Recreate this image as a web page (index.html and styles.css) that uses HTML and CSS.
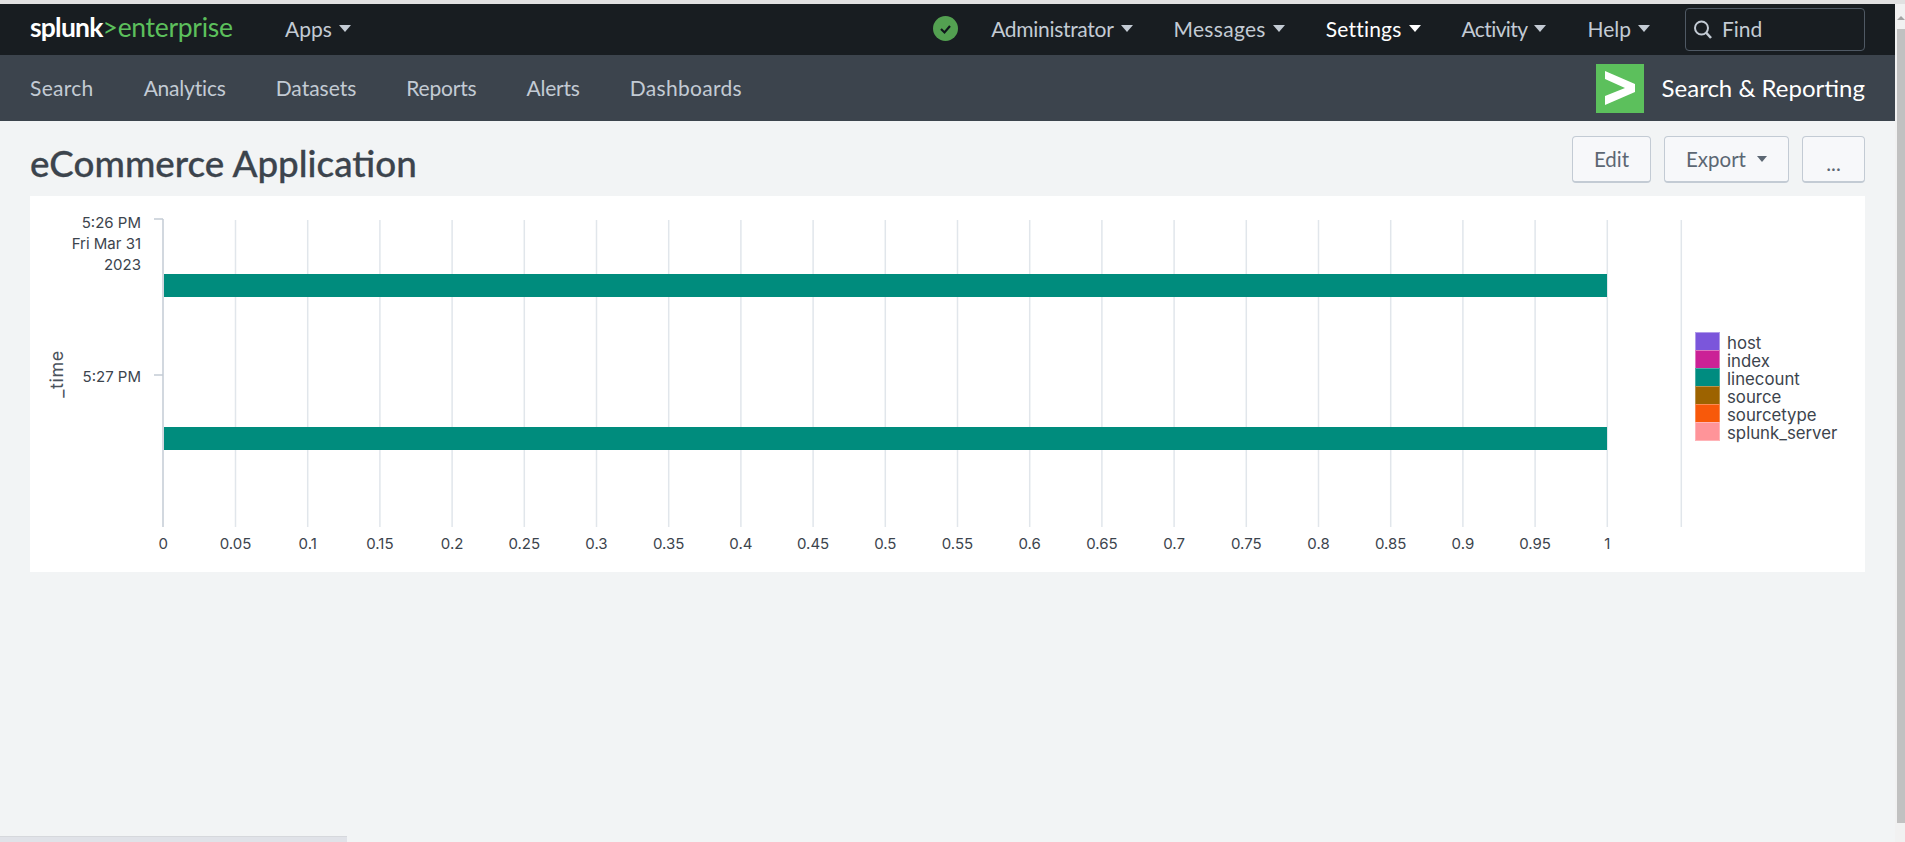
FILE: index.html
```html
<!DOCTYPE html>
<html lang="en">
<head>
<meta charset="utf-8">
<title>eCommerce Application</title>
<link rel="stylesheet" href="styles.css">
</head>
<body>
<div class="topstrip"></div>
<div class="frame">
  <main class="main">
    <header class="systembar">
      <div class="logo"><span class="logo-splunk">splunk</span><span class="logo-gt">&gt;</span><span class="logo-ent">enterprise</span></div>
      <a class="sys-item apps">Apps<i class="caret"></i></a>
      <div class="sys-right">
        <svg class="status" viewBox="0 0 25 25"><circle cx="12.5" cy="12.5" r="12.5" fill="#53a051"/><path d="M8 13l3.5 3.5L17 10" fill="none" stroke="#10171c" stroke-width="2.2"/></svg>
        <a class="sys-item item-admin">Administrator<i class="caret"></i></a>
        <a class="sys-item item-messages">Messages<i class="caret"></i></a>
        <a class="sys-item item-settings active">Settings<i class="caret"></i></a>
        <a class="sys-item item-activity">Activity<i class="caret"></i></a>
        <a class="sys-item">Help<i class="caret"></i></a>
        <div class="find">
          <svg class="find-icon" viewBox="0 0 20 20"><circle cx="8.5" cy="8" r="6.5" fill="none" stroke="#c3cbd4" stroke-width="2"/><path d="M13 12.500l5 5.500" stroke="#c3cbd4" stroke-width="2.6"/></svg>
          <span class="find-label">Find</span>
        </div>
      </div>
    </header>
    <nav class="appbar">
      <a class="app-link link-search">Search</a>
      <a class="app-link link-tight">Analytics</a>
      <a class="app-link">Datasets</a>
      <a class="app-link link-tight">Reports</a>
      <a class="app-link link-tight">Alerts</a>
      <a class="app-link link-search">Dashboards</a>
      <div class="app-brand">
        <svg class="app-icon" viewBox="0 0 48 49"><rect width="48" height="49" fill="#5cc05c"/><path d="M9 7L39 20V28L9 41V32L29 24L9 15z" fill="#fff"/></svg>
        <span class="app-name">Search &amp; Reporting</span>
      </div>
    </nav>
    <section class="titlebar">
      <h1 class="title">eCommerce Application</h1>
      <div class="actions">
        <button class="btn btn-edit">Edit</button>
        <button class="btn btn-export">Export<i class="caret caret-dark"></i></button>
        <button class="btn btn-more">...</button>
      </div>
    </section>
    <section class="panel">
      <svg class="chart" viewBox="30 196 1835 376">
        <g class="grid">
          <line x1="235.5" y1="220" x2="235.5" y2="527"/><line x1="307.7" y1="220" x2="307.7" y2="527"/>
          <line x1="379.9" y1="220" x2="379.9" y2="527"/><line x1="452.1" y1="220" x2="452.1" y2="527"/>
          <line x1="524.3" y1="220" x2="524.3" y2="527"/><line x1="596.5" y1="220" x2="596.5" y2="527"/>
          <line x1="668.7" y1="220" x2="668.7" y2="527"/><line x1="740.9" y1="220" x2="740.9" y2="527"/>
          <line x1="813.1" y1="220" x2="813.1" y2="527"/><line x1="885.3" y1="220" x2="885.3" y2="527"/>
          <line x1="957.5" y1="220" x2="957.5" y2="527"/><line x1="1029.7" y1="220" x2="1029.7" y2="527"/>
          <line x1="1101.9" y1="220" x2="1101.9" y2="527"/><line x1="1174.1" y1="220" x2="1174.1" y2="527"/>
          <line x1="1246.3" y1="220" x2="1246.3" y2="527"/><line x1="1318.5" y1="220" x2="1318.5" y2="527"/>
          <line x1="1390.7" y1="220" x2="1390.7" y2="527"/><line x1="1462.9" y1="220" x2="1462.9" y2="527"/>
          <line x1="1535.1" y1="220" x2="1535.1" y2="527"/><line x1="1607.3" y1="220" x2="1607.3" y2="527"/>
          <line x1="1681.3" y1="220" x2="1681.3" y2="527"/>
        </g>
        <g class="axis">
          <line x1="163" y1="219" x2="163" y2="527"/>
          <line x1="154" y1="219" x2="163" y2="219"/>
          <line x1="154" y1="375" x2="163" y2="375"/>
        </g>
        <rect class="bar" x="164" y="274" width="1443" height="23"/>
        <rect class="bar" x="164" y="427" width="1443" height="23"/>
        <g class="tick-y">
          <text x="141" y="228">5:26 PM</text>
          <text x="141" y="249">Fri Mar 31</text>
          <text x="141" y="270">2023</text>
          <text x="141" y="382">5:27 PM</text>
        </g>
        <text class="axis-title" transform="translate(63 374) rotate(-90)">_time</text>
        <g class="tick-x">
          <text x="163.3" y="549">0</text><text x="235.5" y="549">0.05</text><text x="307.7" y="549">0.1</text>
          <text x="379.9" y="549">0.15</text><text x="452.1" y="549">0.2</text><text x="524.3" y="549">0.25</text>
          <text x="596.5" y="549">0.3</text><text x="668.7" y="549">0.35</text><text x="740.9" y="549">0.4</text>
          <text x="813.1" y="549">0.45</text><text x="885.3" y="549">0.5</text><text x="957.5" y="549">0.55</text>
          <text x="1029.7" y="549">0.6</text><text x="1101.9" y="549">0.65</text><text x="1174.1" y="549">0.7</text>
          <text x="1246.3" y="549">0.75</text><text x="1318.5" y="549">0.8</text><text x="1390.7" y="549">0.85</text>
          <text x="1462.9" y="549">0.9</text><text x="1535.1" y="549">0.95</text><text x="1607.3" y="549">1</text>
        </g>
        <g class="legend">
          <rect class="sw-host" x="1695.5" y="332.5" width="24" height="18"/><text x="1727" y="349">host</text>
          <rect class="sw-index" x="1695.5" y="350.5" width="24" height="18"/><text x="1727" y="367">index</text>
          <rect class="sw-linecount" x="1695.5" y="368.5" width="24" height="18"/><text x="1727" y="385">linecount</text>
          <rect class="sw-source" x="1695.5" y="386.5" width="24" height="18"/><text x="1727" y="403">source</text>
          <rect class="sw-sourcetype" x="1695.5" y="404.5" width="24" height="18"/><text x="1727" y="421">sourcetype</text>
          <rect class="sw-server" x="1695.5" y="422.5" width="24" height="18"/><text x="1727" y="439">splunk_server</text>
        </g>
      </svg>
    </section>
    <div class="spacer"></div>
    <div class="hscroll"><div class="hthumb"></div></div>
  </main>
  <aside class="vscroll">
    <i class="vscroll-arrow"></i>
    <div class="vthumb"></div>
  </aside>
</div>
</body>
</html>
```
FILE: styles.css
```css
* { box-sizing: border-box; }
html, body { margin: 0; height: 100%; overflow: hidden; }
body {
  display: flex;
  flex-direction: column;
  font-family: "Lato", "Liberation Sans", sans-serif;
  background: #f2f4f5;
  color: #3c444d;
}
a { text-decoration: none; }
.topstrip { height: 4px; background: #e1e1e1; flex: none; }
.frame { flex: 1; display: flex; min-height: 0; }
.main { flex: 1; display: flex; flex-direction: column; min-width: 0; }

.systembar {
  height: 51px;
  flex: none;
  background: #181d21;
  display: flex;
  align-items: center;
  padding: 0 30px 2px;
}
.logo { width: 255px; font-size: 26.500px; line-height: 1; letter-spacing: -0.3px; margin-top: -2px; white-space: nowrap; }
.logo-splunk { color: #fff; font-weight: 700; letter-spacing: -0.8px; }
.logo-gt { color: #5cc05c; }
.logo-ent { color: #5cc05c; }
.sys-item {
  font-size: 21px;
  color: #c3cbd4;
  display: inline-flex;
  align-items: center;
  white-space: nowrap;
}
.sys-item.active { color: #fff; }
.item-admin { letter-spacing: -0.3px; }
.item-messages { letter-spacing: 0.3px; }
.item-settings { letter-spacing: 0.2px; }
.item-activity { letter-spacing: -0.6px; }
.caret {
  display: inline-block;
  width: 0;
  height: 0;
  margin-left: 7px;
  border-left: 6px solid transparent;
  border-right: 6px solid transparent;
  border-top: 7px solid currentColor;
}
.caret-dark { margin-left: 11px; border-left-width: 5.500px; border-right-width: 5.500px; border-top-width: 6px; }
.sys-right { margin-left: auto; display: flex; align-items: center; gap: 41px; }
.status { width: 25px; height: 25px; margin-right: -8px; }
.find {
  width: 180px;
  height: 43px;
  margin-left: -6px;
  margin-top: 2px;
  border: 1px solid #4f5964;
  border-radius: 4px;
  display: flex;
  align-items: center;
  gap: 9px;
  padding: 0 7px;
  color: #c3cbd4;
  font-size: 21px;
}
.find-icon { width: 20px; height: 20px; }
.find-label { margin-top: -2px; }

.appbar {
  height: 66px;
  flex: none;
  background: #3c444d;
  display: flex;
  align-items: center;
  gap: 50px;
  padding: 0 30px;
}
.app-link { font-size: 21px; color: #c3cbd4; margin-top: -2px; }
.link-search { letter-spacing: 0.3px; }
.link-tight { letter-spacing: -0.2px; }
.app-brand { margin-left: auto; display: flex; align-items: center; gap: 18px; }
.app-icon { width: 48px; height: 49px; }
.app-name { font-size: 24px; color: #fff; white-space: nowrap; margin-top: -2px; }

.titlebar {
  height: 75px;
  flex: none;
  display: flex;
  align-items: flex-start;
  justify-content: space-between;
  padding: 15px 30px 0;
}
.title { margin: 7px 0 0; font-size: 36.800px; line-height: 40px; font-weight: 500; color: #3c444d; -webkit-text-stroke: 0.3px #3c444d; }
.actions { display: flex; gap: 13px; }
.btn {
  height: 47px;
  border: 1px solid #c3cbd4;
  border-bottom-width: 2px;
  border-radius: 4px;
  background: #f7f8fa;
  color: #5c6773;
  font-family: inherit;
  font-size: 20.500px;
  padding: 0;
  display: flex;
  align-items: center;
  justify-content: center;
}
.btn-edit { width: 79px; }
.btn-export { width: 125px; }
.btn-more { width: 63px; padding-top: 8px; }

.panel { flex: none; height: 376px; margin: 0 30px; background: #fff; }
.chart { display: block; width: 100%; height: 100%; }
.grid line { stroke: #e1e6eb; stroke-width: 1.5; }
.axis line { stroke: #c3cbd4; stroke-width: 1.5; }
.bar { fill: #008c7d; }
.tick-y text, .tick-x text { font-family: "Inter", sans-serif; font-size: 15px; fill: #3c444d; }
.tick-y text { text-anchor: end; }
.tick-x text { text-anchor: middle; }
.axis-title { font-family: "Inter", sans-serif; font-size: 18px; letter-spacing: 0.6px; fill: #4a525b; text-anchor: middle; }
.legend text { font-family: "Inter", sans-serif; font-size: 16.800px; fill: #3c444d; }
.sw-host { fill: #7b56db; stroke: #b09be9; }
.sw-index { fill: #cb2196; stroke: #dd78bf; }
.sw-linecount { fill: #008c80; stroke: #4cadA4; }
.sw-source { fill: #9d6300; stroke: #ba924c; }
.sw-sourcetype { fill: #f8590a; stroke: #fa8b53; }
.sw-server { fill: #ff9499; stroke: #ffb4b8; }

.spacer { flex: 1; }
.hscroll { height: 6px; flex: none; }
.hthumb { width: 347px; height: 100%; background: #e0e2e8; border-top: 1px solid #d6d8dc; }

.vscroll {
  width: 10px;
  flex: none;
  background: #f1f1f1;
  display: flex;
  flex-direction: column;
  align-items: flex-end;
  padding-top: 12px;
}
.vscroll-arrow {
  width: 0;
  height: 0;
  border-left: 4px solid transparent;
  border-right: 4px solid transparent;
  border-bottom: 4px solid #a3a3a3;
}
.vthumb { width: 8px; height: 794px; margin-top: 9px; background: #c1c1c1; }
```
